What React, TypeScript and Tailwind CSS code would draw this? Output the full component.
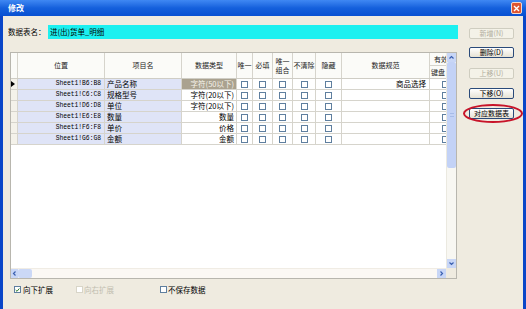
import React from 'react';

type Row = { pos: string; name: string; type: string; spec: string; selected?: boolean };

const rows: Row[] = [
  { pos: 'Sheet1!B6:B8', name: '产品名称', type: '字符(50以下)', spec: '商品选择', selected: true },
  { pos: 'Sheet1!C6:C8', name: '规格型号', type: '字符(20以下)', spec: '' },
  { pos: 'Sheet1!D6:D8', name: '单位', type: '字符(20以下)', spec: '' },
  { pos: 'Sheet1!E6:E8', name: '数量', type: '数量', spec: '' },
  { pos: 'Sheet1!F6:F8', name: '单价', type: '价格', spec: '' },
  { pos: 'Sheet1!G6:G8', name: '金额', type: '金额', spec: '' },
];

const checkCols = ['w-[16px]', 'w-[20px]', 'w-[20px]', 'w-[23px]', 'w-[26px]'];

const Box: React.FC<{ checked?: boolean; disabled?: boolean }> = ({ checked, disabled }) => (
  <span
    className={
      'w-[7px] h-[7px] shrink-0 border bg-white flex items-center justify-center ' +
      (disabled ? 'border-[#d8d5c8]' : 'border-[#5f7f9f]')
    }
  >
    {checked && (
      <svg width="6" height="6" viewBox="0 0 6 6">
        <polyline points="0.8,3 2.4,4.6 5.2,1.2" fill="none" stroke="#2a7a2a" strokeWidth="1.2" />
      </svg>
    )}
  </span>
);

const Chevron: React.FC<{ dir: 'up' | 'down' | 'left' | 'right' }> = ({ dir }) => {
  const pts = {
    up: '1.5,4.5 3.5,2.5 5.5,4.5',
    down: '1.5,2.5 3.5,4.5 5.5,2.5',
    left: '4.5,1.5 2.5,3.5 4.5,5.5',
    right: '2.5,1.5 4.5,3.5 2.5,5.5',
  }[dir];
  return (
    <svg width="7" height="7" viewBox="0 0 7 7">
      <polyline points={pts} fill="none" stroke="#3a5fb0" strokeWidth="1.2" />
    </svg>
  );
};

const Btn: React.FC<{ label: string; disabled?: boolean; className?: string }> = ({ label, disabled, className }) => (
  <div
    className={
      'w-[45px] h-[11px] rounded-[2px] border flex items-center justify-center text-[7px] leading-none ' +
      (disabled
        ? 'border-[#cfcdc0] bg-[#f4f2e8] text-[#b2ae9e] '
        : 'border-[#2a4a7a] bg-linear-to-b from-white to-[#e6e2d4] text-black ') +
      (className ?? '')
    }
  >
    {label}
  </div>
);

const Grid: React.FC = () => (
  <div className="mt-[13px] ml-[2px] w-[447px] h-[227px] border border-[#b8b6ae] bg-white flex flex-col">
    <div className="flex-1 flex min-h-0">
      {/* table */}
      <div className="w-[435px] flex flex-col overflow-hidden">
        {/* header */}
        <div className="h-[26px] flex text-[7px] text-[#222] bg-[#fbfbf8] border-b border-[#cfcdc5]">
          <div className="w-[7px] border-r border-[#d6d4cc]" />
          <div className="w-[87px] border-r border-[#d6d4cc] flex items-center justify-center">位置</div>
          <div className="w-[77px] border-r border-[#d6d4cc] flex items-center justify-center">项目名</div>
          <div className="w-[55px] border-r border-[#d6d4cc] flex items-center justify-center">数据类型</div>
          <div className="w-[16px] border-r border-[#d6d4cc] flex items-center justify-center whitespace-nowrap overflow-hidden">唯一</div>
          <div className="w-[20px] border-r border-[#d6d4cc] flex items-center justify-center">必填</div>
          <div className="w-[20px] border-r border-[#d6d4cc] flex flex-col items-center justify-center leading-[8.5px]">
            <span>唯一</span>
            <span>组合</span>
          </div>
          <div className="w-[23px] border-r border-[#d6d4cc] flex items-center justify-center whitespace-nowrap">不清除</div>
          <div className="w-[26px] border-r border-[#d6d4cc] flex items-center justify-center">隐藏</div>
          <div className="w-[88px] border-r border-[#d6d4cc] flex items-center justify-center">数据规范</div>
          <div className="w-[16px] flex flex-col overflow-hidden">
            <div className="h-[13px] border-b border-[#d6d4cc] flex items-center pl-[4px] whitespace-nowrap">有效性</div>
            <div className="flex-1 flex items-center pl-[1px] whitespace-nowrap">键盘</div>
          </div>
        </div>
        {/* rows */}
        {rows.map((r) => (
          <div key={r.pos} className="h-[11px] flex text-[7.5px] leading-none border-b border-[#d6d4cc]">
            <div className="w-[7px] bg-[#f4f2ea] border-r border-[#d6d4cc] flex items-center">
              {r.selected && (
                <svg width="4" height="6" viewBox="0 0 4 6">
                  <polygon points="0,0 4,3 0,6" fill="#000" />
                </svg>
              )}
            </div>
            <div className="w-[87px] bg-[#dfe4f7] border-r border-[#d6d4cc] flex items-center justify-end pr-[3px] font-['Liberation_Mono',monospace] text-[6.3px]">
              {r.pos}
            </div>
            <div className="w-[77px] bg-[#dfe4f7] border-r border-[#d6d4cc] flex items-center pl-[2px]">{r.name}</div>
            <div
              className={
                'w-[55px] border-r border-[#d6d4cc] flex items-center justify-end pr-[2px] whitespace-nowrap ' +
                (r.selected ? 'bg-[#aaa28f] text-[#f6f3ea]' : 'bg-white')
              }
            >
              {r.type}
            </div>
            {checkCols.map((w, i) => (
              <div key={i} className={w + ' border-r border-[#d6d4cc] flex items-center justify-center'}>
                <Box />
              </div>
            ))}
            <div className="w-[88px] border-r border-[#d6d4cc] flex items-center justify-end pr-[3px]">{r.spec}</div>
            <div className="w-[16px] flex items-center pl-[12px] overflow-hidden">
              <Box />
            </div>
          </div>
        ))}
      </div>
      {/* vertical scrollbar */}
      <div className="w-[10px] flex flex-col bg-[#f8f7f2] border-l border-[#ebe9e0]">
        <div className="h-[9px] bg-[#c8d6f6] flex items-center justify-center">
          <Chevron dir="up" />
        </div>
        <div className="h-[106px] bg-[#c3d2f6] rounded-[2px] flex items-center justify-center">
          <div className="w-[4px] h-[4px] border-y border-[#a6bbe8]" />
        </div>
        <div className="flex-1" />
        <div className="h-[9px] bg-[#c8d6f6] flex items-center justify-center">
          <Chevron dir="down" />
        </div>
      </div>
    </div>
    {/* horizontal scrollbar */}
    <div className="h-[10px] flex">
      <div className="w-[435px] flex bg-[#fbf8f4] border-t border-[#f0ece4]">
        <div className="w-[7px] bg-[#c8d6f6] flex items-center justify-center">
          <Chevron dir="left" />
        </div>
        <div className="w-[14px] bg-[#cbd8f6] rounded-[2px]" />
        <div className="flex-1" />
        <div className="w-[9px] bg-[#c8d6f6] flex items-center justify-center">
          <Chevron dir="right" />
        </div>
      </div>
      <div className="w-[10px] bg-[#efebe0]" />
    </div>
  </div>
);

export default function App() {
  return (
    <div className="relative w-[526px] h-[309px] overflow-hidden flex flex-col bg-[#0a46c8] font-['Noto_Sans_CJK_SC','Noto_Sans',sans-serif] text-black">
      {/* title bar */}
      <div className="h-[16px] shrink-0 flex items-center justify-between pl-[8px] pr-[4px] bg-linear-to-b from-[#3f88f3] via-[#1460dc] to-[#0850d2]">
        <span className="text-[8px] font-bold text-white leading-none">修改</span>
        <span className="w-[11px] h-[12px] rounded-[2px] border border-[#f4d8cc] bg-[#de5530] flex items-center justify-center">
          <svg width="7" height="7" viewBox="0 0 7 7">
            <path d="M1 1L6 6M6 1L1 6" stroke="#fff" strokeWidth="1.4" />
          </svg>
        </span>
      </div>
      {/* body */}
      <div className="flex-1 mx-[3px] flex bg-[#efebe0]">
        <div className="w-[455px] pl-[5px] flex flex-col">
          <div className="mt-[9px] h-[14px] flex items-center">
            <span className="w-[40px] text-[7.5px] leading-none">数据表名：</span>
            <div className="w-[410px] h-[14px] bg-[#1cf0f0] flex items-center pl-[2px] text-[7.5px] leading-none">
              进(出)货单_明细
            </div>
          </div>
          <Grid />
          <div className="mt-[6px] h-[9px] flex items-center text-[7.5px] leading-none">
            <div className="w-[62px] ml-[6px] flex items-center gap-[2px]">
              <Box checked />
              <span>向下扩展</span>
            </div>
            <div className="w-[84px] flex items-center gap-[1px] text-[#c2beb0]">
              <Box disabled />
              <span>向右扩展</span>
            </div>
            <div className="flex items-center gap-[1px]">
              <Box />
              <span>不保存数据</span>
            </div>
          </div>
        </div>
        <div className="ml-[11px] pt-[12px] flex flex-col">
          <Btn label="新增(N)" disabled />
          <Btn label="删除(D)" className="mt-[8px]" />
          <Btn label="上移(U)" disabled className="mt-[10px]" />
          <Btn label="下移(O)" className="mt-[9px]" />
          <Btn label="对应数据表" className="mt-[9px] text-[7.5px]" />
        </div>
      </div>
      {/* annotation ellipse */}
      <div className="absolute left-[463px] top-[104px] w-[60px] h-[19px] rounded-[50%] border-2 border-[#c8142a]" />
    </div>
  );
}
